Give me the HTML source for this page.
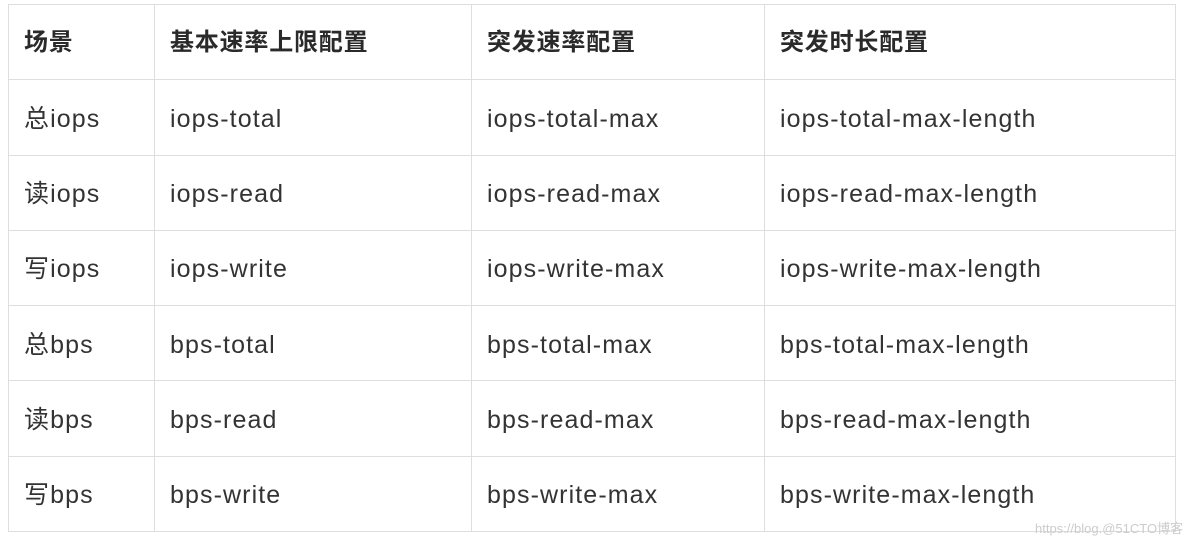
<!DOCTYPE html>
<html><head><meta charset="utf-8"><style>
body{margin:0;background:#fff;width:1184px;height:542px;overflow:hidden;position:relative}
table{position:absolute;left:8px;top:4px;border-collapse:collapse;font-family:"Liberation Sans","Noto Sans CJK SC",sans-serif;font-size:25px;color:#333;letter-spacing:1.1px}
td,th{border:1.5px solid #dedede;height:75.25px;padding:4px 0 0 15px;text-align:left;box-sizing:border-box;line-height:1;vertical-align:middle}
th{font-weight:bold;color:#2a2a2a;font-size:24px;letter-spacing:0.8px;padding-top:2px}
.w{position:absolute;left:1035px;top:518px;font-family:"Liberation Sans","Noto Sans CJK SC",sans-serif;font-size:13px;color:#ccc}
</style></head><body>
<table>
<colgroup><col style="width:146px"><col style="width:317px"><col style="width:293px"><col style="width:411px"></colgroup>
<tr><th>场景</th><th>基本速率上限配置</th><th>突发速率配置</th><th>突发时长配置</th></tr>
<tr><td>总iops</td><td>iops-total</td><td>iops-total-max</td><td>iops-total-max-length</td></tr>
<tr><td>读iops</td><td>iops-read</td><td>iops-read-max</td><td>iops-read-max-length</td></tr>
<tr><td>写iops</td><td>iops-write</td><td>iops-write-max</td><td>iops-write-max-length</td></tr>
<tr><td>总bps</td><td>bps-total</td><td>bps-total-max</td><td>bps-total-max-length</td></tr>
<tr><td>读bps</td><td>bps-read</td><td>bps-read-max</td><td>bps-read-max-length</td></tr>
<tr><td>写bps</td><td>bps-write</td><td>bps-write-max</td><td>bps-write-max-length</td></tr>
</table>
<div class="w">https://blog.@51CTO博客</div>
</body></html>
